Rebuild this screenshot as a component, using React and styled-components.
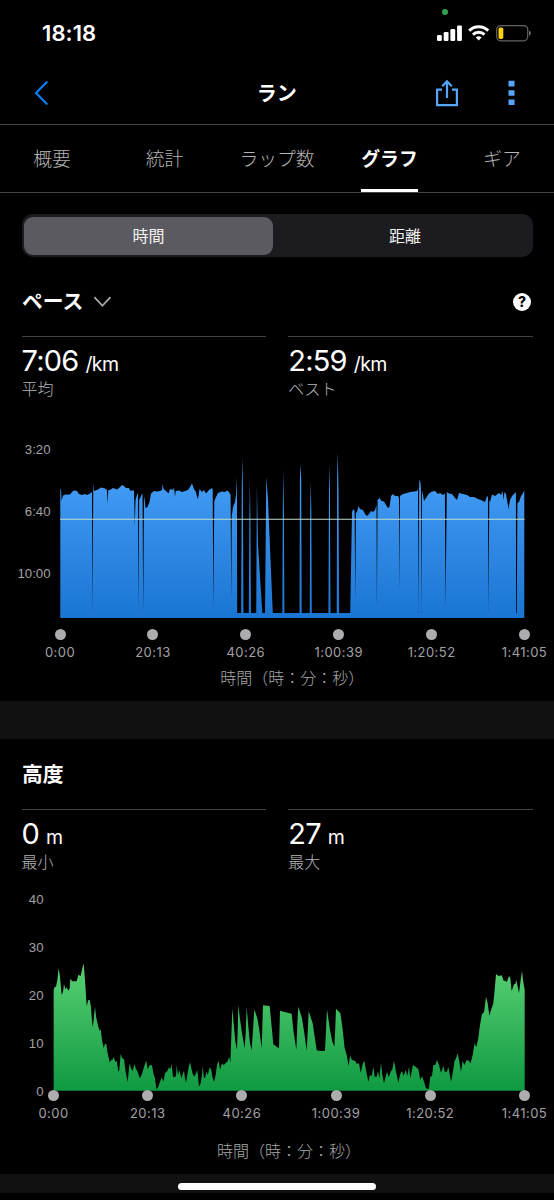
import React from "react";
import styled, { createGlobalStyle } from "styled-components";

const GlobalStyle = createGlobalStyle`
  * {
    box-sizing: border-box;
  }

  body {
    margin: 0;
    background: #000;
    color: #fff;
    font-family: Inter, "Noto Sans CJK JP", sans-serif;
  }
`

const Screen = styled.div`
  display: flex;
  flex-direction: column;
  width: 554px;
  height: 1200px;
  overflow: hidden;
  background: #000;
`

/* ---------- header ---------- */

const StatusBar = styled.div`
  position: relative;
  display: flex;
  align-items: center;
  justify-content: space-between;
  height: 66px;
  padding: 0 23px 0 42px;
`

const Clock = styled.div`
  font-size: 22px;
  font-weight: 600;
  letter-spacing: 0.1px;
`

const CameraDot = styled.span`
  position: absolute;
  top: 9px;
  left: 442px;
  width: 6px;
  height: 6px;
  border-radius: 50%;
  background: #2fa14f;
`

const NavBar = styled.header`
  display: grid;
  grid-template-columns: 1fr auto 1fr;
  align-items: center;
  height: 59px;
  padding: 0 39.5px 4px 34px;
  border-bottom: 1px solid #434343;

  svg {
    display: block;
  }
`

const Title = styled.h1`
  margin: 2px 0 0 5px;
  font-size: 20px;
  font-weight: 700;
  line-height: 28px;
`

const Actions = styled.div`
  display: flex;
  align-items: center;
  justify-content: flex-end;
  gap: 48.5px;
`

const Tabs = styled.nav`
  display: grid;
  grid-template-columns: repeat(5, 112.5px);
  justify-content: center;
  height: 68px;
  border-bottom: 1px solid #434343;
`

const Tab = styled.div`
  justify-self: center;
  height: 67px;
  padding-top: 2px;
  font-size: 18.8px;
  line-height: 66px;
  white-space: nowrap;
  color: ${props => (props.$active ? "#fff" : "#b4b4b4")};
  font-weight: ${props => (props.$active ? 700 : 300)};
  border-bottom: 3px solid ${props => (props.$active ? "#fff" : "transparent")};
`

const Segmented = styled.div`
  display: grid;
  grid-template-columns: 1fr 1fr;
  height: 43px;
  margin: 21px 21.5px 0;
  padding: 3px 2.5px;
  border-radius: 11px;
  background: #1c1b20;
`

const Segment = styled.div`
  padding-top: 1px;
  border-radius: 9px;
  font-size: 16px;
  line-height: 37px;
  text-align: center;
  color: #f2f2f2;
  background: ${props => (props.$active ? "#5b5a60" : "transparent")};
  margin-right: ${props => (props.$active ? "4px" : "-3px")};
`

/* ---------- stat blocks ---------- */

const SectionHead = styled.div`
  display: flex;
  align-items: center;
  height: 32px;
  margin-top: ${props => props.$top}px;
  padding: 0 23px 0 22px;

  svg {
    margin-top: 2px;
  }
`

const SectionTitle = styled.h2`
  margin: 1px 10px 0 0;
  font-size: 20.8px;
  font-weight: 700;
  line-height: 32px;
`

const Help = styled.span`
  display: flex;
  align-items: center;
  justify-content: center;
  width: 18px;
  height: 18px;
  margin-top: 1px;
  margin-left: auto;
  border-radius: 50%;
  background: #fff;
  color: #000;
  font-size: 14px;
  font-weight: 800;
`

const Stats = styled.div`
  display: grid;
  grid-template-columns: 1fr 1fr;
  gap: 22px;
  margin: ${props => props.$top}px 21px 0 21.5px;
`

const Stat = styled.div`
  height: 64px;
  border-top: 1px solid #434343;
`

const Value = styled.div`
  padding-top: 6px;
  font-size: 29px;
  line-height: 36px;
  letter-spacing: -0.8px;

  small {
    margin-left: 7px;
    font-size: 19.5px;
    letter-spacing: -0.6px;
  }
`

const Label = styled.div`
  margin-top: -3px;
  font-size: 16px;
  font-weight: 300;
  line-height: 20px;
  color: #b4b4b4;
`

/* ---------- charts ---------- */

const ChartRow = styled.div`
  display: flex;
  height: ${props => props.$height}px;
  margin-top: ${props => props.$top}px;

  svg {
    display: block;
    flex: none;
  }
`

const YAxis = styled.div`
  display: flex;
  flex-direction: column;
  justify-content: space-between;
  flex: none;
  width: ${props => props.$width}px;
  height: ${props => props.$height}px;
  margin: ${props => props.$shift || 0}px ${props => props.$gap}px 0 0;
  font-family: "Liberation Sans", sans-serif;
  font-size: 13.2px;
  line-height: 16px;
  text-align: right;
  color: #a2a2a2;
`

const XAxis = styled.div`
  position: relative;
  display: flex;
  justify-content: space-between;
  margin: ${props => props.$top}px 29.5px 0 ${props => props.$left}px;
`

const Tick = styled.div`
  display: flex;
  flex-direction: column;
  align-items: center;
  width: 0;
  font-size: 13px;
  line-height: 16px;
  letter-spacing: 0.45px;
  white-space: nowrap;
  color: #a2a2a2;

  &::before {
    content: "";
    width: 11px;
    height: 11px;
    margin-bottom: 4px;
    border-radius: 50%;
    background: #aeacae;
  }
`

const Caption = styled.div`
  margin: ${props => props.$top}px 29.5px 0 ${props => props.$left}px;
  font-size: 16px;
  font-weight: 300;
  line-height: 20px;
  text-align: center;
  color: #a8a8a8;
`

const Divider = styled.div`
  height: 38px;
  margin-top: 13px;
  background: #111;
`

const HomeArea = styled.div`
  display: flex;
  align-items: center;
  justify-content: center;
  height: 19px;
  margin-top: 13px;
  padding-top: 5px;
  background: #111;
`

const HomeBar = styled.div`
  width: 198px;
  height: 7px;
  border-radius: 4px;
  background: #fff;
`

const times = ["0:00", "20:13", "40:26", "1:00:39", "1:20:52", "1:41:05"]

const pace = `60.3,490 61,489 61.6,501 63,495.5 66,494.5 70,494.5 72,492 74,490.5 77,491 79,494 82,495 85,494 87,495 90,493.5 92,492
92.5,612 93.3,483 94,491 98,489.5 101,487.5 105,488.5 107,490 107.7,504 108.3,490 110,490 113,488 117,489.5 119,488 122,485 124,486
126,488 129,488 130,490.5 134,490.5 134.8,527 135.5,500 137,495 138,493 138.5,610 139.2,500 141,496 142.5,493 143.2,612 144,496
144.6,499 145.5,508 147.5,507 149.5,502 151,493.5 154,491 157,491.5 160,491 162,490 162.7,484 163.5,489 166,491 168.5,493.5 170,489
173,490 174,487.5 175,497 175.7,491 179,490.5 182,492 185,491 188,490 190,487 192,483.5 194,489 196,492 197.5,499 198.5,496
199.5,489 202,492 204,490 206,493.5 209,490 212,488 212.7,490 213.3,607 214.3,501 216,497 218,493 222,491.5 225,492 227,490.5
229,492 230.6,495 231.2,600 231.8,516 233,507 235,502 236,495 236.5,477 237,500 237.2,613 241.1,613 241.8,485 242.3,457 242.8,485
243.5,613 248.8,613 249.4,520 249.9,480 250.4,520 251,613 256.2,613 256.9,485 258,545 262.3,613 265,613 266.3,477 268,500 272.8,613
282.3,613 282.8,510 283.3,470 283.9,510 284.4,613 299.5,613 299.9,480 300.6,464 301.2,480 301.7,613 309.7,613 310.2,510 310.7,482
311.3,510 311.8,613 328.4,613 329,490 329.4,464 329.9,490 330.5,613 336.7,613 337.2,475 337.7,452 338.5,490 339.1,613 350.2,613
352,512 353.3,509 354.6,511 355.3,600 355.9,513 357,512 358.5,506 360,509 363,510 365,514 367,516 369,514
371,511 373,512 375,510 376.5,505 376.9,608 377.6,500 379.5,498 381.5,501 384,501.5 386,505 388,508 389.5,507 391,496 393,494
395,496 398,496 399,498 399.4,590 400,496 403,494 407,493 410,492 414,491.5 417,491 418,489 418.5,613 419.2,480 420.3,482 421,489
421.4,612 422,490 423,495 424,501 426,498 429,493.5 432,491.5 435,491 438,494 440,493 443,495 444.9,493.5 445.5,607 446.8,492
449,493.5 452,494 455,498 457,500 459,493 463,494 467,495 470,497 474,497 478,499 481,500 485,502 487,496 488,497 488.4,610
489.3,500 490,502 492,494.5 495,496 499,493 501,495 502.5,491 503.5,500 504.5,492 506,494 507.5,503 508.5,509 510,500 512,496
515,493 515.9,492 516.1,613 516.8,613 517.4,503 519,502 521,496 522.5,494 524.3,490.5`

// [points, dx, dy], three units to a pixel
const altitude = [
  ["161,330 163,322 168,320 172,300 176,264 180,290 185,345 189,335 192,312 196,328 200,322 205,332 209,325 211,296 217,304 230,304 235,284 242,288 247,265 251,250 255,300 260,378 265,360 269,360 273,380 275,410 278,442 281,420 285,380 289,415 295,440 299,453 302,447 306,480 311,504 315,492 319,492 322,515 329,547 336,538 338,540 341,530 346,546 350,542 355,575 358,570 362,522 367,535 372,538 377,575 383,606 386,575 389,550 393,565 398,574 403,552 408,567 413,575 419,595 425,585 432,560 439,542 443,568 449,556 456,556 460,580 465,595 469,628 474,622 480,606 485,592 490,605 495,580 502,573 507,562 511,568 515,553 519,590 523,592 528,588 530,555 534,585 538,570", 0, 0],
  ["4,295 8,283 12,272 15,295 18,308 22,285 26,262 30,247 34,265 38,282 43,290 48,280 52,270 57,320 62,310 66,285 68,258 72,295 76,292 79,275 83,285 89,262 94,270 97,290 102,306 107,285 111,255 116,242 120,270 126,250 131,256 136,250 142,245 148,230 151,250 154,170 157,85 161,130 166,185 171,210 173,150 175,75 179,110 186,160 194,205 197,160 200,82 205,140 210,190 215,210 219,150 223,88 232,115 238,150 245,205 247,140 249,76 269,78 274,130 280,193 290,200 297,205 300,92 335,101 340,150 349,210 352,130 355,80 366,115 373,160 380,212 383,160 386,93 398,130 404,170 410,211 422,213 435,212 438,150 441,88 450,150 457,185 463,200 466,140 468,86 481,100 487,140 494,205 500,225 506,258", 540, 300],
  ["0,317 6,330 15,332 21,342 27,340 32,368 38,342 43,332 48,360 55,395 60,375 65,378 70,350 74,380 80,380 84,362 88,385 93,338 97,375 102,400 107,380 111,365 116,382 122,365 127,358 132,332 137,360 145,398 150,375 156,362 161,378 167,360 172,378 177,350 181,385 189,345 197,350 205,358 211,390 216,378 222,395 228,415 236,418 241,380 246,378 250,345 256,345 261,330 267,345 273,368 280,348 284,365 291,365 295,350 303,395 309,365 313,335 318,325 323,310 328,335 333,365 338,332 343,345 350,330 356,332 362,340 368,315 374,280 379,292 384,270 390,225 396,192 402,187 408,140 413,160 418,197 423,180 430,160 434,120 438,72 446,78 455,76 461,92 466,92 470,97 477,78 481,85 485,123 492,103 496,102 499,90 507,130 512,90 516,62 519,90 524,120", 1050, 210],
]

const altitudePoints = altitude
  .map(([points, dx, dy]) =>
    points
      .split(" ")
      .map(p => p.split(",").map(Number))
      .map(([x, y]) => `${x + dx},${y + dy}`)
      .join(" ")
  )
  .join(" ")

const PaceChart = () => (
  <svg width="465" height="178" viewBox="60 440 465 178">
    <defs>
      <linearGradient id="pace" gradientUnits="userSpaceOnUse" x1="0" y1="450" x2="0" y2="618">
        <stop offset="0" stopColor="#4ba5fc" />
        <stop offset="1" stopColor="#1a74d2" />
      </linearGradient>
    </defs>
    <polygon fill="url(#pace)" points={`60.3,618 ${pace} 524.3,618`} />
    <path d="M60 519.3H524.5" stroke="#c4dccf" strokeWidth="1.1" />
  </svg>
)

const AltitudeChart = () => (
  <svg width="472" height="199" viewBox="159 36 1416 597">
    <defs>
      <linearGradient id="altitude" gradientUnits="userSpaceOnUse" x1="0" y1="250" x2="0" y2="632">
        <stop offset="0" stopColor="#5ad073" />
        <stop offset="1" stopColor="#0f9a42" />
      </linearGradient>
    </defs>
    <polygon fill="url(#altitude)" points={`161,632 ${altitudePoints} 1574,632`} />
  </svg>
)

const TimeAxis = ({ top, left }) => (
  <XAxis $top={top} $left={left}>
    {times.map(t => (
      <Tick key={t}>{t}</Tick>
    ))}
  </XAxis>
)

const StatusIcons = () => (
  <svg width="94" height="20" viewBox="437 23 94 20">
    <g fill="#fff">
      <rect x="437" y="35" width="4.8" height="6" rx="1.2" />
      <rect x="443.7" y="32" width="4.8" height="9" rx="1.2" />
      <rect x="450.4" y="29" width="4.8" height="12" rx="1.2" />
      <rect x="457.1" y="25.5" width="4.8" height="15.5" rx="1.2" />
      <path d="M475.8 37.4a4.4 4.4 0 0 1 5.8 0l-2.9 3.2z" />
    </g>
    <g fill="none" stroke="#fff" strokeWidth="2.9">
      <path d="M469.2 30.6a13.6 13.6 0 0 1 19 0" />
      <path d="M472.9 34.6a8.3 8.3 0 0 1 11.6 0" />
    </g>
    <rect x="496.7" y="25.6" width="31" height="15.2" rx="4" fill="none" stroke="#67645f" strokeWidth="1.2" />
    <path d="M529 30.6q1.8 1 1.8 2.6t-1.8 2.6z" fill="#77746f" />
    <rect x="498.5" y="27.5" width="4.8" height="11.5" rx="1.8" fill="#fbd00c" />
  </svg>
)

const App = () => {
  return (
    <Screen>
      <GlobalStyle />
      <StatusBar>
        <Clock>18:18</Clock>
        <CameraDot />
        <StatusIcons />
      </StatusBar>
      <NavBar>
        <svg width="15" height="24" viewBox="0 0 15 24" fill="none" stroke="#0a7cf5" strokeWidth="2.3">
          <path d="M12.6 1.3 2 12l10.6 10.7" strokeLinecap="round" strokeLinejoin="round" />
        </svg>
        <Title>ラン</Title>
        <Actions>
          <svg width="24" height="28" viewBox="0 0 24 28" fill="none" stroke="#55a6fb" strokeWidth="2.2">
            <path d="M7 10.7H2.1v15.5h19.8V10.7H17" />
            <path d="M12 19V2.5M7.2 7.2 12 2.4l4.8 4.8" />
          </svg>
          <svg width="7" height="26" viewBox="0 0 7 26" fill="#55a6fb">
            <path d="M.5.8h6v5.6h-6zM.5 10.2h6v5.6h-6zM.5 19.4h6V25h-6z" />
          </svg>
        </Actions>
      </NavBar>
      <Tabs>
        <Tab>概要</Tab>
        <Tab>統計</Tab>
        <Tab>ラップ数</Tab>
        <Tab $active>グラフ</Tab>
        <Tab>ギア</Tab>
      </Tabs>
      <Segmented>
        <Segment $active>時間</Segment>
        <Segment>距離</Segment>
      </Segmented>

      <SectionHead $top={28}>
        <SectionTitle>ペース</SectionTitle>
        <svg width="19" height="12" viewBox="0 0 19 12" fill="none" stroke="#a8a8a8" strokeWidth="1.8">
          <path d="m1.4 1.2 8 8.6 8-8.6" />
        </svg>
        <Help>?</Help>
      </SectionHead>
      <Stats $top={19}>
        <Stat>
          <Value>
            7:06<small>/km</small>
          </Value>
          <Label>平均</Label>
        </Stat>
        <Stat>
          <Value>
            2:59<small>/km</small>
          </Value>
          <Label>ベスト</Label>
        </Stat>
      </Stats>
      <ChartRow $top={40} $height={178}>
        <YAxis $width={50.5} $gap={9.5} $height={139.5} $shift={2}>
          <span>3:20</span>
          <span>6:40</span>
          <span>10:00</span>
        </YAxis>
        <PaceChart />
      </ChartRow>
      <TimeAxis top={11} left={60} />
      <Caption $top={8} $left={60}>時間（時：分：秒）</Caption>

      <Divider />

      <SectionHead $top={19}>
        <SectionTitle>高度</SectionTitle>
      </SectionHead>
      <Stats $top={19}>
        <Stat>
          <Value>
            0<small>m</small>
          </Value>
          <Label>最小</Label>
        </Stat>
        <Stat>
          <Value>
            27<small>m</small>
          </Value>
          <Label>最大</Label>
        </Stat>
      </Stats>
      <ChartRow $top={19} $height={199}>
        <YAxis $width={43.5} $gap={9.5} $height={208}>
          <span>40</span>
          <span>30</span>
          <span>20</span>
          <span>10</span>
          <span>0</span>
        </YAxis>
        <AltitudeChart />
      </ChartRow>
      <TimeAxis top={-1} left={53.5} />
      <Caption $top={20} $left={53.5}>時間（時：分：秒）</Caption>

      <HomeArea>
        <HomeBar />
      </HomeArea>
    </Screen>
  )
}

export default App;
